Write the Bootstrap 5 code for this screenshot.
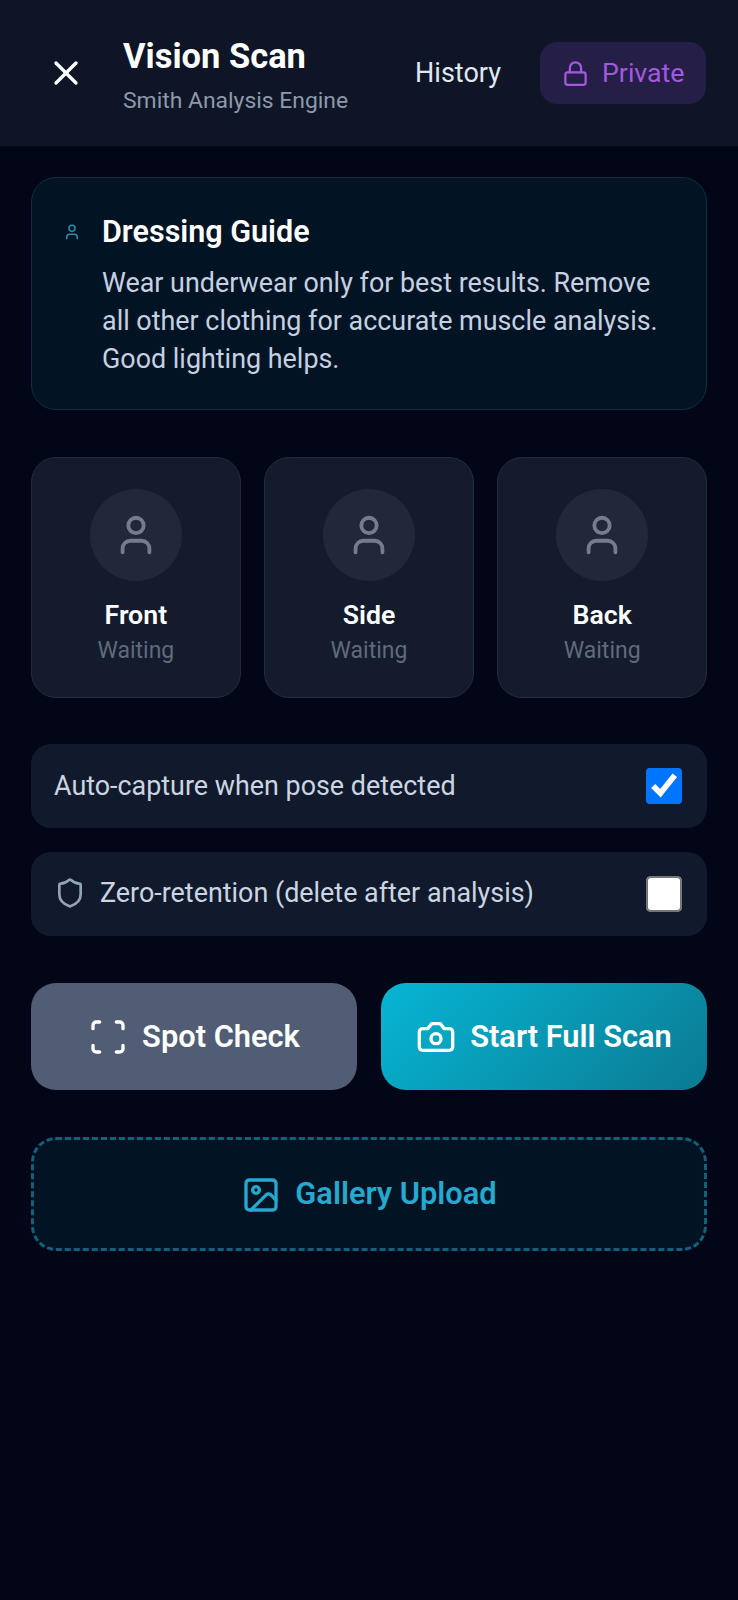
<!DOCTYPE html>
<html lang="en">
<head>
<meta charset="utf-8">
<meta name="viewport" content="width=device-width, initial-scale=1">
<title>Vision Scan</title>
<link href="https://cdn.jsdelivr.net/npm/bootstrap@5.3.0/dist/css/bootstrap.min.css" rel="stylesheet">
<style>
html,body{background:#020617;}
body{font-family:Roboto,"Liberation Sans",sans-serif;min-height:1600px;color:#fff;}
svg.ic{fill:none;stroke:currentColor;stroke-width:2;stroke-linecap:round;stroke-linejoin:round;flex:none;display:block;}
.top-bar{height:146px;background:#0d1526;padding:0 32px 0 46px;}
.close-x{width:40px;height:40px;padding:0;background:none;border:0;color:#fff;margin-right:37px;}
.close-x svg{width:40px;height:40px;}
.app-title{font-size:34.5px;font-weight:700;line-height:40px;margin:6px 0 10px;}
.app-sub{font-size:22.9px;line-height:30px;color:#8d99ab;}
.hist-btn{font-size:27px;color:#e2e8f0;background:none;border:0;padding:0;margin-right:39px;}
.priv-btn{height:62px;width:166px;background:#251e46;color:#a259e0;border:0;border-radius:17px;font-size:26.7px;padding-left:22px;}
.priv-btn svg{width:27px;height:27px;margin-right:13px;}
.page-main{padding:31px 31px 0 31px;}
.guide-box{height:233px;background:#021423;border:1.5px solid #0c3040;border-radius:25px;padding:35px 38px 0 31px;margin-bottom:47px;}
.guide-box svg{width:18px;height:18px;color:#2a8fae;margin-top:10px;margin-right:21px;}
.guide-title{font-size:30.5px;font-weight:600;line-height:38px;margin:0 0 12.5px;}
.guide-text{font-size:26.9px;line-height:38.3px;color:#c5d1e2;margin:0;}
.tile-grid{display:grid;grid-template-columns:repeat(3,1fr);gap:23.5px;margin-bottom:46px;}
.pose-tile{height:241px;background:#131b2d;border:1.5px solid #232c3e;border-radius:25px;padding-top:31px;text-align:center;}
.pose-ring{width:92px;height:92px;border-radius:50%;background:#20283a;color:#757c8e;margin:0 auto 16px;}
.pose-ring svg{width:46px;height:46px;}
.pose-name{font-size:26.7px;font-weight:600;line-height:36px;}
.pose-state{font-size:23px;line-height:35px;color:#606a7c;}
.opt-row{height:84px;background:#111a2c;border-radius:20px;padding:0 25px 0 23px;margin-bottom:23.5px;font-size:26.9px;color:#cbd5e1;}
.opt-row svg{width:32px;height:32px;color:#94a3b8;margin-right:14px;}
.opt-row input{width:18px;height:18px;zoom:2;margin:0;accent-color:#0075ff;flex:none;}
.action-grid{display:grid;grid-template-columns:repeat(2,1fr);gap:24px;margin-top:47px;margin-bottom:47px;}
.act-btn{height:107px;border:0;border-radius:25px;color:#fff;font-size:30.8px;font-weight:600;padding:2px 0 0;}
.act-btn svg{width:40px;height:40px;margin-right:14px;}
.act-gray{background:#505d74;}
.act-cyan{background:linear-gradient(135deg,#06b6d4,#0b7a92);}
.gallery-btn{width:100%;height:114px;background:#021324;border:3px dashed #14607c;border-radius:25px;color:#25a9cf;font-size:30.8px;font-weight:600;padding:2px 0 0;}
.gallery-btn svg{width:40px;height:40px;margin-right:14px;}
</style>
</head>
<body>
<header class="top-bar d-flex align-items-center">
  <button class="close-x flex-shrink-0" aria-label="Close"><svg class="ic" viewBox="0 0 24 24"><path d="M18 6 6 18"/><path d="m6 6 12 12"/></svg></button>
  <div class="flex-grow-1">
    <h1 class="app-title">Vision Scan</h1>
    <div class="app-sub">Smith Analysis Engine</div>
  </div>
  <button class="hist-btn">History</button>
  <button class="priv-btn d-flex align-items-center">
    <svg class="ic" viewBox="0 0 24 24"><rect x="3" y="11" width="18" height="11" rx="2" ry="2"/><path d="M7 11V7a5 5 0 0 1 10 0v4"/></svg>
    <span>Private</span>
  </button>
</header>

<main class="page-main">
  <section class="guide-box d-flex align-items-start">
    <svg class="ic" viewBox="0 0 24 24"><path d="M19 21v-2a4 4 0 0 0-4-4H9a4 4 0 0 0-4 4v2"/><circle cx="12" cy="7" r="4"/></svg>
    <div>
      <h2 class="guide-title">Dressing Guide</h2>
      <p class="guide-text">Wear underwear only for best results. Remove all other clothing for accurate muscle analysis. Good lighting helps.</p>
    </div>
  </section>

  <section class="tile-grid">
    <div class="pose-tile">
      <div class="pose-ring d-flex align-items-center justify-content-center"><svg class="ic" viewBox="0 0 24 24"><path d="M19 21v-2a4 4 0 0 0-4-4H9a4 4 0 0 0-4 4v2"/><circle cx="12" cy="7" r="4"/></svg></div>
      <div class="pose-name">Front</div>
      <div class="pose-state">Waiting</div>
    </div>
    <div class="pose-tile">
      <div class="pose-ring d-flex align-items-center justify-content-center"><svg class="ic" viewBox="0 0 24 24"><path d="M19 21v-2a4 4 0 0 0-4-4H9a4 4 0 0 0-4 4v2"/><circle cx="12" cy="7" r="4"/></svg></div>
      <div class="pose-name">Side</div>
      <div class="pose-state">Waiting</div>
    </div>
    <div class="pose-tile">
      <div class="pose-ring d-flex align-items-center justify-content-center"><svg class="ic" viewBox="0 0 24 24"><path d="M19 21v-2a4 4 0 0 0-4-4H9a4 4 0 0 0-4 4v2"/><circle cx="12" cy="7" r="4"/></svg></div>
      <div class="pose-name">Back</div>
      <div class="pose-state">Waiting</div>
    </div>
  </section>

  <label class="opt-row d-flex align-items-center justify-content-between">
    <span>Auto-capture when pose detected</span>
    <input type="checkbox" checked>
  </label>
  <label class="opt-row d-flex align-items-center justify-content-between">
    <span class="d-flex align-items-center"><svg class="ic" viewBox="0 0 24 24"><path d="M20 13c0 5-3.5 7.5-7.66 8.95a1 1 0 0 1-.67-.01C7.5 20.5 4 18 4 13V6a1 1 0 0 1 1-1c2 0 4.5-1.2 6.24-2.72a1.17 1.17 0 0 1 1.52 0C14.51 3.81 17 5 19 5a1 1 0 0 1 1 1z"/></svg>Zero-retention (delete after analysis)</span>
    <input type="checkbox">
  </label>

  <section class="action-grid">
    <button class="act-btn act-gray d-flex align-items-center justify-content-center">
      <svg class="ic" viewBox="0 0 24 24"><path d="M3 7V5a2 2 0 0 1 2-2h2"/><path d="M17 3h2a2 2 0 0 1 2 2v2"/><path d="M21 17v2a2 2 0 0 1-2 2h-2"/><path d="M7 21H5a2 2 0 0 1-2-2v-2"/></svg>Spot Check
    </button>
    <button class="act-btn act-cyan d-flex align-items-center justify-content-center">
      <svg class="ic" viewBox="0 0 24 24"><path d="M14.5 4h-5L7 7H4a2 2 0 0 0-2 2v9a2 2 0 0 0 2 2h16a2 2 0 0 0 2-2V9a2 2 0 0 0-2-2h-3l-2.5-3z"/><circle cx="12" cy="13" r="3"/></svg>Start Full Scan
    </button>
  </section>

  <button class="gallery-btn d-flex align-items-center justify-content-center">
    <svg class="ic" viewBox="0 0 24 24"><rect x="3" y="3" width="18" height="18" rx="2" ry="2"/><circle cx="9" cy="9" r="2"/><path d="m21 15-3.086-3.086a2 2 0 0 0-2.828 0L6 21"/></svg>Gallery Upload
  </button>
</main>
<script src="https://cdn.jsdelivr.net/npm/bootstrap@5.3.0/dist/js/bootstrap.bundle.min.js"></script>
</body>
</html>
